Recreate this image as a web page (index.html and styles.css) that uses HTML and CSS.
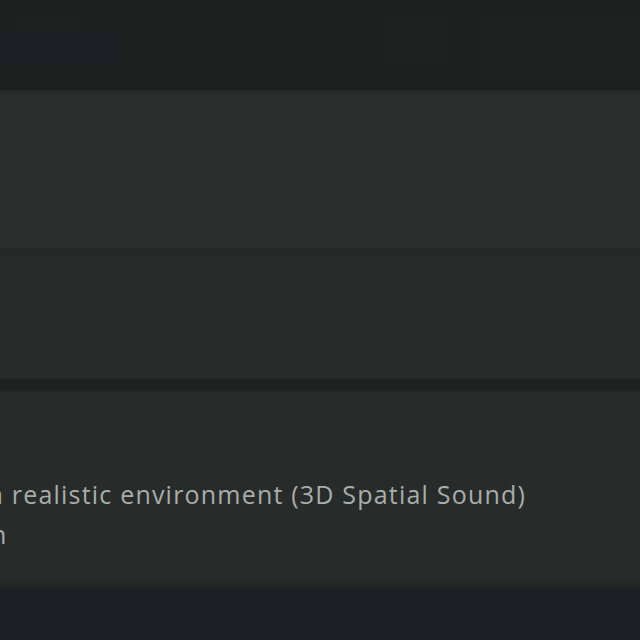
FILE: index.html
```html
<!DOCTYPE html>
<html>
<head>
<meta charset="utf-8">
<link rel="stylesheet" href="styles.css">
</head>
<body>
<div class="page">
  <header class="topbar">
    <div class="ghost ghost-a"></div>
    <div class="ghost ghost-b"></div>
    <div class="ghost ghost-c"></div>
    <div class="ghost ghost-d"></div>
  </header>
  <section class="card card-one"></section>
  <div class="divider"></div>
  <section class="card card-two"></section>
  <div class="gap"></div>
  <section class="card card-three">
    <p class="line line-one"><span class="cut">a</span> realistic environment (3D Spatial Sound)</p>
    <p class="line line-two"><span class="cut-two">n</span></p>
  </section>
  <footer class="bottom"></footer>
</div>
</body>
</html>
```

FILE: styles.css
```css
html, body {
  margin: 0;
  padding: 0;
  background: #1c2024;
  overflow: hidden;
}
.page {
  width: 640px;
  height: 640px;
  display: flex;
  flex-direction: column;
  font-family: "Open Sans", "Noto Sans", sans-serif;
}
.topbar {
  height: 88px;
  flex: none;
  background: #1c2120;
  position: relative;
  border-bottom: 1px solid #171b1a;
}
.ghost { position: absolute; }
.ghost-a { left: 20px; top: 16px; width: 58px; height: 16px; background: #1d2220; }
.ghost-b { left: 0; top: 32px; width: 117px; height: 32px; background: #1c2024; }
.ghost-c { left: 385px; top: 16px; width: 65px; height: 48px; background: #1d2220; }
.ghost-d { left: 483px; top: 16px; width: 157px; height: 64px; background: #1d2221; }
.card {
  flex: none;
}
.card-one {
  height: 159px;
  background: linear-gradient(#1f2422 0, #2a2f2d 6px, #2a2f2d 100%);
}
.divider {
  height: 8px;
  flex: none;
  background: linear-gradient(#252a28, #232826);
}
.card-two {
  height: 121px;
  background: #272c2a;
}
.gap {
  height: 15px;
  flex: none;
  background: linear-gradient(#2a2f2d 0, #1e2321 3px, #1e2321 12px, #242927 100%);
}
.card-three {
  height: 196px;
  background: linear-gradient(#272c2a 0, #272c2a 188px, #1d2220 196px);
  padding-top: 82px;
  box-sizing: border-box;
  overflow: hidden;
}
.line {
  margin: 0;
  font-size: 25px;
  line-height: 40px;
  color: #a9adab;
  white-space: nowrap;
  letter-spacing: 1.2px;
  font-weight: 500;
}
.cut {
  display: inline-block;
  margin-left: -11px;
}
.cut-two {
  display: inline-block;
  margin-left: -9px;
}
.bottom {
  flex: 1;
  background: #1c2024;
}
```
